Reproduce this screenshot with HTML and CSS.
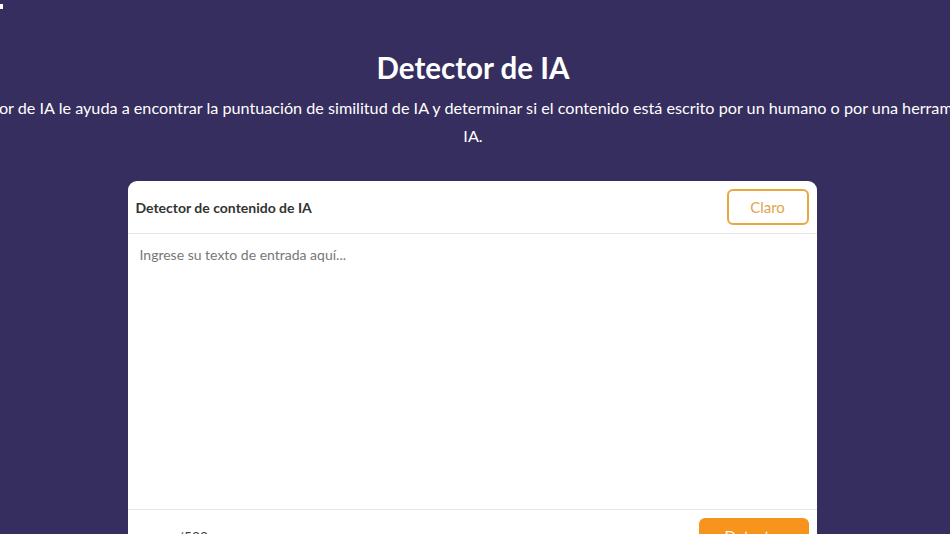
FILE: index.html
```html
<!DOCTYPE html>
<html lang="es">
<head>
<meta charset="utf-8">
<title>Detector de IA</title>
<link rel="stylesheet" href="styles.css">
</head>
<body>
<span class="corner-mark"></span>
<main class="page">
  <h1 class="title">Detector de IA</h1>
  <div class="lead-wrap">
    <p class="lead">El detector de IA le ayuda a encontrar la puntuación de similitud de IA y determinar si el contenido está escrito por un humano o por una herramienta de IA.</p>
  </div>
  <section class="card">
    <header class="card-head">
      <h2 class="card-title">Detector de contenido de IA</h2>
      <button class="btn-clear" type="button">Claro</button>
    </header>
    <textarea class="input" placeholder="Ingrese su texto de entrada aquí..."></textarea>
    <footer class="card-foot">
      <span class="counter">/500</span>
      <button class="btn-detect" type="button">Detectar</button>
    </footer>
  </section>
</main>
</body>
</html>
```
FILE: styles.css
```css
* { box-sizing: border-box; }
html, body {
  margin: 0;
  padding: 0;
  background: #362e5e;
  font-family: Lato, "Open Sans", Arial, sans-serif;
  overflow: hidden;
}
.corner-mark {
  position: absolute;
  left: 0;
  top: 4px;
  width: 3px;
  height: 5px;
  background: #ffffff;
}
.page {
  display: flex;
  flex-direction: column;
  align-items: center;
  padding: 50px 4px 0 0;
}
.title {
  margin: 0;
  font-size: 29.5px;
  line-height: 36px;
  font-weight: 700;
  color: #ffffff;
}
.lead-wrap {
  width: 100%;
  display: flex;
  justify-content: center;
}
.lead {
  flex: none;
  width: 1080px;
  margin: 8px 0 0;
  text-align: center;
  font-size: 16.2px;
  line-height: 28px;
  color: #ffffff;
}
.card {
  margin: 31px 2px 0 0;
  width: 689px;
  background: #ffffff;
  border-radius: 9px;
  display: flex;
  flex-direction: column;
}
.card-head {
  display: flex;
  align-items: center;
  justify-content: space-between;
  padding: 8px;
  border-bottom: 1px solid #e6e6e6;
}
.card-title {
  margin: 0;
  font-size: 14px;
  font-weight: 700;
  color: #333333;
}
.btn-clear {
  width: 82px;
  height: 36px;
  background: #ffffff;
  border: 2px solid #e9a73f;
  border-radius: 6px;
  color: #e2a44c;
  font-family: inherit;
  font-size: 15px;
}
.input {
  display: block;
  width: 100%;
  height: 275px;
  border: none;
  resize: none;
  outline: none;
  padding: 11px 12px;
  font-family: inherit;
  font-size: 14px;
  line-height: 20px;
  color: #333333;
}
.input::placeholder {
  color: #777777;
}
.card-foot {
  display: flex;
  align-items: flex-start;
  justify-content: space-between;
  padding: 8px 8px 10px 50px;
  border-top: 1px solid #e6e6e6;
}
.counter {
  padding-top: 10px;
  font-size: 14px;
  color: #444444;
}
.btn-detect {
  width: 110px;
  height: 36px;
  background: #f7941d;
  border: none;
  border-radius: 6px;
  color: #ffffff;
  font-family: inherit;
  font-size: 15px;
}
```
